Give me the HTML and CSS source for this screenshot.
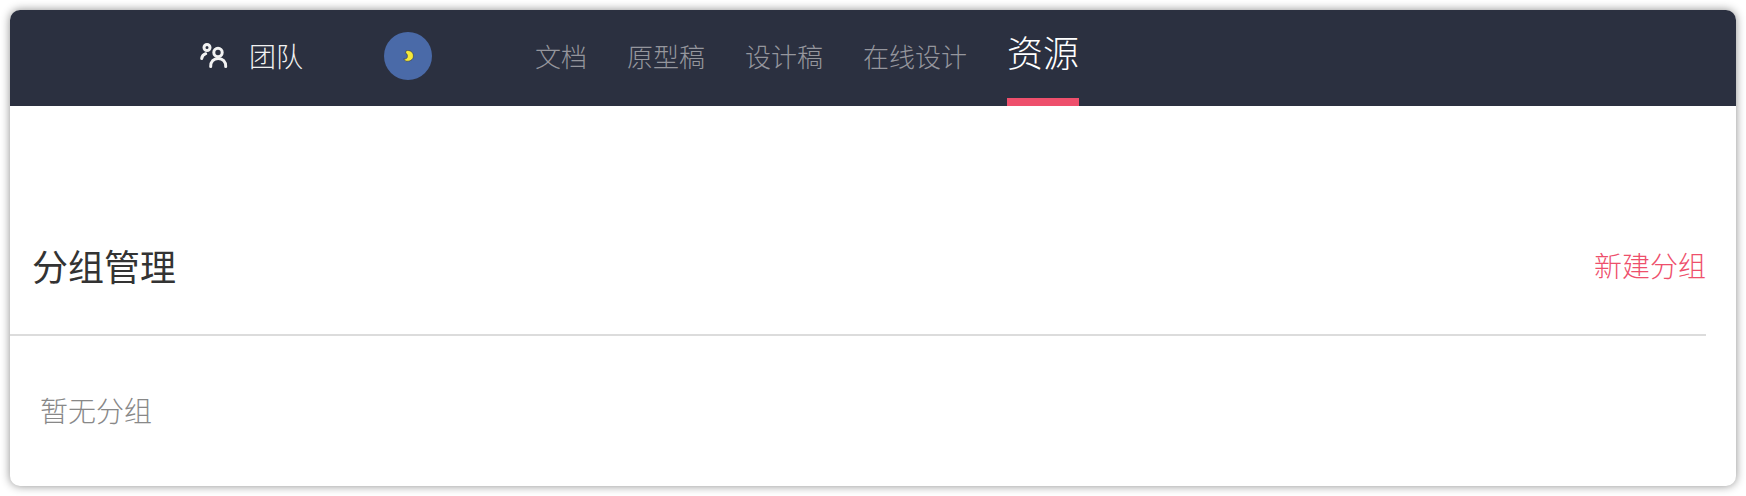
FILE: index.html
```html
<!DOCTYPE html>
<html lang="zh-CN">
<head>
    <meta charset="UTF-8">
    <meta name="viewport" content="width=device-width, initial-scale=1.0">
    <title>资源</title>
    <link rel="stylesheet" href="styles.css">
</head>
<body>
    <div class="window">
        <header class="topbar">
            <div class="team">
                <svg class="team-icon" viewBox="0 0 28 26" width="28" height="26" fill="none" stroke="#f2f2f2" stroke-width="3" stroke-linecap="round">
                    <circle cx="7" cy="5.500" r="3"/>
                    <path d="M1.700 16.500c.3-2.500 1.800-4 4-4.800"/>
                    <circle cx="18" cy="10.500" r="4.200"/>
                    <path d="M10.700 24.500c0-5 3-8 7.500-8s7.500 3 7.500 8"/>
                </svg>
                <span class="team-name">团队</span>
            </div>
            <div class="avatar">
                <svg class="moon" viewBox="0 0 10 11" width="11" height="12">
                    <path d="M3 .5c3.500-.5 6.500 1.500 6.500 5 0 3.500-3.500 5.300-7 4.700L.5 8.200c2 .5 3.500-.5 3.500-2.400S3.500 3.300 2.200 3z" fill="#f5e93a" stroke="#2b3040" stroke-width=".5"/>
                </svg>
            </div>
            <nav class="nav">
                <a class="nav-item">文档</a>
                <a class="nav-item">原型稿</a>
                <a class="nav-item">设计稿</a>
                <a class="nav-item">在线设计</a>
                <a class="nav-item active">资源</a>
            </nav>
        </header>

        <section class="groups">
            <div class="groups-head">
                <h1>分组管理</h1>
                <a class="new-group">新建分组</a>
            </div>
            <div class="no-data">暂无分组</div>
        </section>
    </div>
</body>
</html>
```

FILE: styles.css
```css
/* Basic reset */
* {
    margin: 0;
    padding: 0;
    box-sizing: border-box;
}

body {
    font-family: "Noto Sans CJK SC", "Noto Sans", sans-serif;
    font-weight: 400;
    background-color: #fff;
    padding: 10px;
    height: 496px;
    overflow: hidden;
}

/* Window card */
.window {
    height: 476px;
    background-color: #fff;
    border-radius: 10px;
    box-shadow: 0 0 10px rgba(0, 0, 0, 0.45);
    overflow: hidden;
}

/* Top bar */
.topbar {
    display: flex;
    align-items: center;
    height: 96px;
    padding-left: 190px;
    background-color: #2b3040;
}

.team {
    display: flex;
    align-items: center;
    gap: 21px;
    width: 184px;
    margin-top: -6px;
}

.team-name {
    font-size: 27px;
    font-weight: 300;
    color: #f2f2f2;
}

.avatar {
    display: flex;
    justify-content: center;
    align-items: center;
    width: 48px;
    height: 48px;
    margin-top: -4px;
    border-radius: 50%;
    background-color: #4a6aa8;
}

.nav {
    display: flex;
    align-items: center;
    gap: 40px;
    height: 100%;
    margin-left: 103px;
}

.nav-item {
    margin-top: -5px;
    font-size: 26px;
    font-weight: 300;
    color: #95969d;
}

.nav-item.active {
    display: flex;
    align-items: center;
    height: calc(100% + 5px);
    padding-bottom: 2px;
    border-bottom: 8px solid #ee4f6c;
    font-size: 36px;
    color: #fff;
}

/* Groups section */
.groups {
    padding-top: 95px;
}

.groups-head {
    display: flex;
    justify-content: space-between;
    align-items: center;
    height: 135px;
    width: 1696px;
    padding-left: 22px;
    padding-bottom: 6px;
    border-bottom: 2px solid #dcdcdc;
}

.groups-head h1 {
    font-size: 36px;
    font-weight: 400;
    color: #333;
}

.new-group {
    font-size: 28px;
    font-weight: 300;
    color: #ee4f6c;
}

.no-data {
    margin-top: 54px;
    padding-left: 30px;
    font-size: 28px;
    font-weight: 300;
    color: #888;
}
```
